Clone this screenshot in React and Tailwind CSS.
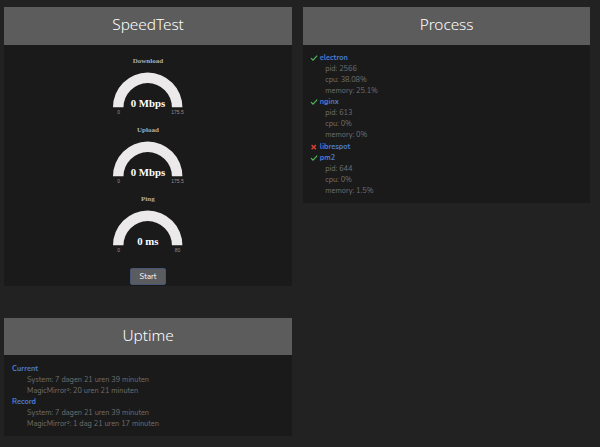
import React from "react";

function Panel({ title, className, children }) {
  return (
    <section className={`w-[287.5px] bg-[#1a1a1a] ${className}`}>
      <h2 className="flex h-[37.5px] items-center justify-center bg-[#5c5c5c] pb-[3px] font-['Noto_Sans','Open_Sans',sans-serif] text-[15.4px] tracking-[-0.05px] font-light text-white">
        {title}
      </h2>
      {children}
    </section>
  );
}

function Gauge({ label, value, max }) {
  return (
    <svg width="90" height="69" viewBox="0 0 90 69" className="block shrink-0">
      <text x="44.9" y="18" textAnchor="middle" fill="#b0b0b0" className="font-['Liberation_Serif',serif] text-[7px] font-bold">
        {label}
      </text>
      <path d="M10 62.3a34.7 34.7 0 0 1 69.4 0H68.9a24.2 24.2 0 0 0-48.4 0Z" fill="#ebe9e9" />
      <text x="44.9" y="61.5" textAnchor="middle" fill="#ffffff" className="font-['Liberation_Serif',serif] text-[10.8px] font-bold">
        {value}
      </text>
      <text x="15.6" y="69" textAnchor="middle" fill="#929292" className="font-['Liberation_Sans',sans-serif] text-[5px]">
        0
      </text>
      <text x="74.5" y="69" textAnchor="middle" fill="#929292" className="font-['Liberation_Sans',sans-serif] text-[5px]">
        {max}
      </text>
    </svg>
  );
}

function StatusIcon({ up }) {
  return (
    <svg width="8" height="8" viewBox="0 0 8 8" fill="none" className="-mt-[1px] shrink-0">
      {up ? (
        <path d="M1 4.2 3 6.2 7.2 1.6" stroke="#4dbd55" strokeWidth="1.15" />
      ) : (
        <path d="m1.6 2 4.3 4.2M5.9 2 1.6 6.2" stroke="#dc4038" strokeWidth="1.4" />
      )}
    </svg>
  );
}

const processes = [
  { name: "electron", up: true, stats: ["pid: 2566", "cpu: 38.08%", "memory: 25.1%"] },
  { name: "nginx", up: true, stats: ["pid: 613", "cpu: 0%", "memory: 0%"] },
  { name: "librespot", up: false, stats: [] },
  { name: "pm2", up: true, stats: ["pid: 644", "cpu: 0%", "memory: 1.5%"] },
];

const uptimes = [
  { name: "Current", lines: ["System: 7 dagen 21 uren 39 minuten", "MagicMirror²: 20 uren 21 minuten"] },
  { name: "Record", lines: ["System: 7 dagen 21 uren 39 minuten", "MagicMirror²: 1 dag 21 uren 17 minuten"] },
];

export default function App() {
  return (
    <main className="flex h-[447px] w-[600px] items-start gap-[11px] overflow-hidden bg-[#222222] pt-[7.4px] pl-[4.3px] font-['Nunito','Open_Sans',sans-serif] text-[7.37px] leading-[11.04px] text-[#6f6f6f]">
      <div className="flex flex-col gap-[32.3px]">
        <Panel title="SpeedTest" className="h-[278.2px]">
          <div className="flex flex-col items-center">
            <Gauge label="Download" value="0 Mbps" max="175.5" />
            <Gauge label="Upload" value="0 Mbps" max="175.5" />
            <Gauge label="Ping" value="0 ms" max="80" />
            <button className="mt-[16px] h-[17.3px] w-[36px] rounded-[2px] border border-[#465574] bg-[#5b5c5f] pt-[1.5px] text-[7.6px] leading-[14px] text-white">
              Start
            </button>
          </div>
        </Panel>
        <Panel title="Uptime" className="h-[118px]">
          <div className="px-[7.8px] pt-[8.3px]">
            {uptimes.map((group) => (
              <div key={group.name}>
                <div className="font-bold text-[#4b7bd1]">{group.name}</div>
                {group.lines.map((line) => (
                  <div key={line} className="pl-[15px] whitespace-nowrap">{line}</div>
                ))}
              </div>
            ))}
          </div>
        </Panel>
      </div>
      <Panel title="Process" className="h-[195.5px]">
        <div className="px-[7.5px] pt-[8.3px]">
          {processes.map((process) => (
            <div key={process.name}>
              <div className="flex h-[11.04px] items-center gap-[1.5px] font-bold text-[#4b7bd1]">
                <StatusIcon up={process.up} />
                <span>{process.name}</span>
              </div>
              {process.stats.map((stat) => (
                <div key={stat} className="pl-[15px]">{stat}</div>
              ))}
            </div>
          ))}
        </div>
      </Panel>
    </main>
  );
}
